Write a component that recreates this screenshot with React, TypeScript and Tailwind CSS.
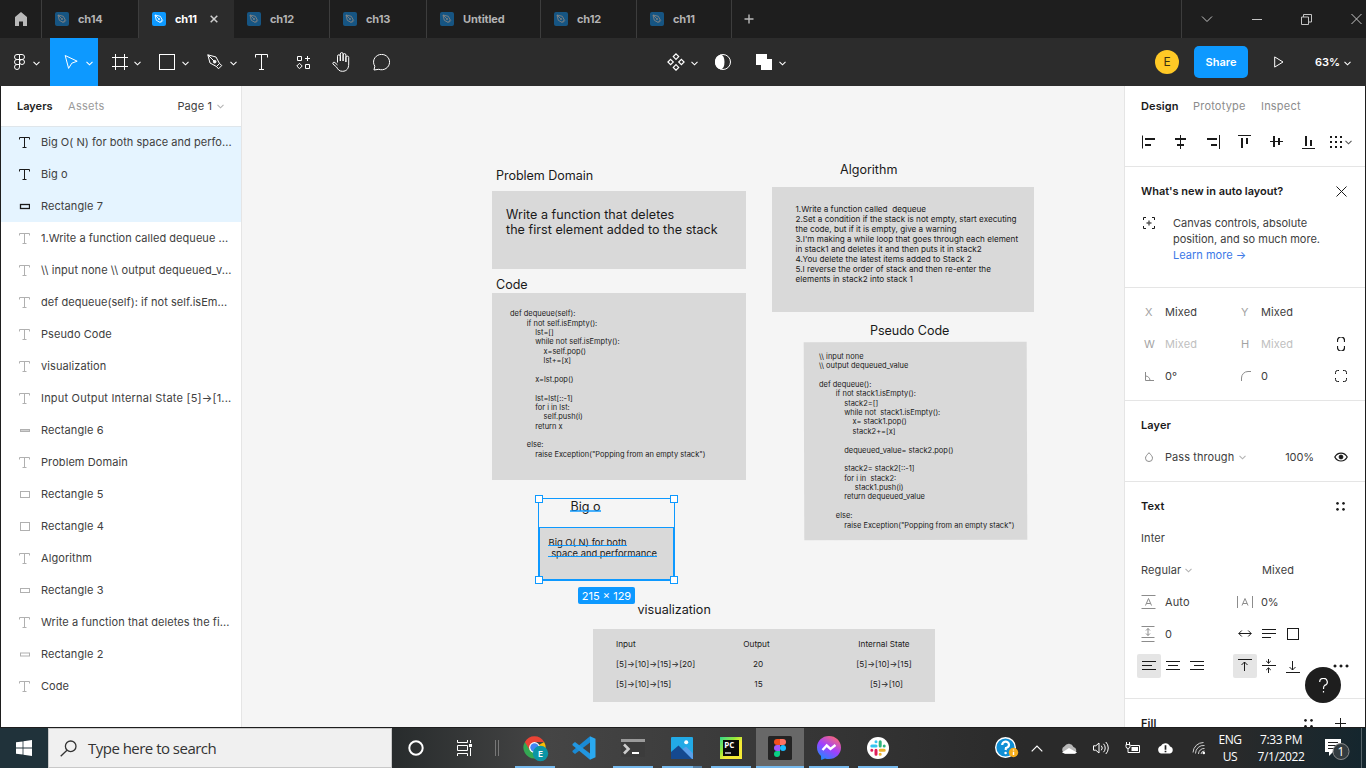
import type { ReactNode } from "react";

/* ---------- shared bits ---------- */

function Svg({ w, h, children, className = "" }: { w: number; h: number; children: ReactNode; className?: string }) {
  return (
    <svg width={w} height={h} viewBox={`0 0 ${w} ${h}`} fill="none" stroke="currentColor" className={`shrink-0 ${className}`}>
      {children}
    </svg>
  );
}

function Chevron({ className = "" }: { className?: string }) {
  return (
    <Svg w={7} h={5} className={className}>
      <path d="M0.5 0.8 L3.5 3.8 L6.5 0.8" strokeWidth="1.1" />
    </Svg>
  );
}

/* ---------- title bar ---------- */

function PenGlyph() {
  return (
    <Svg w={14} h={14}>
      <rect width="14" height="14" rx="2" fill="#0d99ff" stroke="none" />
      <path d="M3 3 L8.3 4.3 L10.3 8 L8 10.3 L4.3 8.3 Z M3 3 L6.5 6.5 M8.5 10.8 L10.8 8.5" stroke="#fff" strokeWidth="0.9" />
      <circle cx="7" cy="7" r="0.9" fill="#fff" stroke="none" />
    </Svg>
  );
}

function Tab({ name, width, active = false }: { name: string; width: string; active?: boolean }) {
  return (
    <div
      className={`flex h-full shrink-0 items-center border-r pl-[13px] text-[11px] font-bold ${width} ${
        active ? "border-[#2c2c2c] bg-[#2c2c2c] text-white" : "border-[#3d3d3d] text-[#b3b3b3]"
      }`}
    >
      <span className={active ? "flex" : "flex opacity-45"}>
        <PenGlyph />
      </span>
      <span className="ml-[9px] tracking-[-0.1px]">{name}</span>
      {active && (
        <Svg w={8} h={8} className="ml-[13px] text-[#d0d0d0]">
          <path d="M0.7 0.7 L7.3 7.3 M7.3 0.7 L0.7 7.3" strokeWidth="1.5" />
        </Svg>
      )}
    </div>
  );
}

function TitleBar() {
  return (
    <div className="flex h-[38px] shrink-0 bg-[#1e1e1e] pl-px">
      <div className="flex w-[41px] shrink-0 items-center border-r border-[#3d3d3d] pl-[14px]">
        <Svg w={12} h={14}>
          <path d="M6 0 L12 5 V14 H8 V9.5 H4 V14 H0 V5 Z" fill="#b9b9b9" stroke="none" />
        </Svg>
      </div>
      <Tab name="ch14" width="w-[97px]" />
      <Tab name="ch11" width="w-[95px]" active />
      <Tab name="ch12" width="w-[96px]" />
      <Tab name="ch13" width="w-[97px]" />
      <Tab name="Untitled" width="w-[114px]" />
      <Tab name="ch12" width="w-[96px]" />
      <Tab name="ch11" width="w-[95px]" />
      <div className="flex w-[450px] shrink-0 items-center border-r border-[#3d3d3d] pl-3 text-[#b9b9b9]">
        <Svg w={10} h={10}>
          <path d="M5 0.5 V9.5 M0.5 5 H9.5" strokeWidth="1.4" />
        </Svg>
      </div>
      <div className="flex flex-1 items-center overflow-hidden pl-[19px] text-[#c4c4c4]">
        <Svg w={12} h={8}>
          <path d="M1 1.5 L6 6.5 L11 1.5" />
        </Svg>
        <Svg w={10} h={10} className="ml-[39px]">
          <path d="M0 5.5 H10" />
        </Svg>
        <Svg w={11} h={11} className="ml-[39px]">
          <path d="M0.5 3 H7.5 V10.5 H0.5 Z M2.5 3 V0.5 H10.5 V8 H7.5" />
        </Svg>
        <Svg w={11} h={12} className="ml-[39px]">
          <path d="M0.5 1 L10.5 11 M10.5 1 L0.5 11" />
        </Svg>
      </div>
    </div>
  );
}

/* ---------- toolbar ---------- */

function Tool({ children, cls, chevron = true }: { children: ReactNode; cls: string; chevron?: boolean }) {
  return (
    <div className={`flex h-full shrink-0 items-center ${cls}`}>
      {children}
      {chevron && <Chevron className="ml-auto mt-0.5" />}
    </div>
  );
}

function Toolbar() {
  return (
    <div className="flex h-12 shrink-0 items-center bg-[#2c2c2c] pl-px text-white">
      <Tool cls="w-[49px] pl-[13px] pr-[10px]">
        <Svg w={11} h={16}>
          <path d="M5.5 0.5 H3 a2.5 2.5 0 0 0 0 5 H5.5 M5.5 0.5 H8 a2.5 2.5 0 0 1 0 5 H5.5 M5.5 5.5 H3 a2.5 2.5 0 0 0 0 5 H5.5 M5.5 0.5 V13 a2.5 2.5 0 1 1 -2.5 -2.5" />
          <circle cx="8" cy="8" r="2.5" />
        </Svg>
      </Tool>
      <Tool cls="w-12 bg-[#0d99ff] pl-[14px] pr-[5px]">
        <Svg w={15} h={16}>
          <path d="M1.2 1.5 L13.2 7.2 L7.8 9.2 L4.6 14.4 Z" strokeLinejoin="round" />
        </Svg>
      </Tool>
      <Tool cls="w-12 pl-[14px] pr-[5px]">
        <Svg w={16} h={16}>
          <path d="M3.5 0 V16 M12.5 0 V16 M0 3.5 H16 M0 12.5 H16" />
        </Svg>
      </Tool>
      <Tool cls="w-12 pl-[13px] pr-[5px]">
        <Svg w={16} h={16}>
          <rect x="0.5" y="0.5" width="15" height="15" />
        </Svg>
      </Tool>
      <Tool cls="w-12 pl-[13px] pr-[5px]">
        <Svg w={16} h={16}>
          <path d="M0.8 0.8 L3 9 L9.5 12.5 L12.5 9.5 L9 3 Z M0.8 0.8 L7 7 M9.5 12.5 L11.5 14.8 L14.8 11.5 L12.5 9.5" strokeLinejoin="round" />
          <circle cx="7.7" cy="7.7" r="1.3" fill="#fff" />
        </Svg>
      </Tool>
      <Tool cls="w-10 pl-[13px]" chevron={false}>
        <Svg w={13} h={16}>
          <path d="M0.5 3.5 V0.5 H12.5 V3.5 M6.5 0.5 V15.5 M4 15.5 H9" />
        </Svg>
      </Tool>
      <Tool cls="w-10 pl-[14px]" chevron={false}>
        <Svg w={15} h={14}>
          <path d="M1.5 1.5 H5.5 V5.5 H1.5 Z M9.5 9.5 H13.5 V13.5 H9.5 Z M11.5 1 V6 M9 3.5 H14 M3.5 8.3 L6.2 11 L3.5 13.7 L0.8 11 Z" />
        </Svg>
      </Tool>
      <Tool cls="w-10 pl-[10px]" chevron={false}>
        <Svg w={18} h={20}>
          <path
            d="M5.5 10.5 V4.2 a1.4 1.4 0 0 1 2.8 0 V9 V2 a1.4 1.4 0 0 1 2.8 0 V9 V3 a1.4 1.4 0 0 1 2.8 0 V10 V5.5 a1.4 1.4 0 0 1 2.8 0 V12 c0 4.5 -2 7.3 -6.2 7.3 c-3.2 0 -4.4 -1.5 -6 -4.3 L1 12 c-.7 -1.2 .7 -2.4 1.9 -1.4 L5.5 13"
            strokeLinejoin="round"
          />
        </Svg>
      </Tool>
      <Tool cls="w-[305px] pl-[11px]" chevron={false}>
        <Svg w={18} h={17}>
          <path d="M1 16 L1.8 12.2 A8 7.7 0 1 1 5.8 15.3 Z" strokeLinejoin="round" />
        </Svg>
      </Tool>
      <div className="flex h-full w-[31px] items-center justify-between">
        <Svg w={18} h={18}>
          <path d="M9 0.9 L11.7 3.6 L9 6.3 L6.3 3.6 Z M9 11.7 L11.7 14.4 L9 17.1 L6.3 14.4 Z M3.6 6.3 L6.3 9 L3.6 11.7 L0.9 9 Z M14.4 6.3 L17.1 9 L14.4 11.7 L11.7 9 Z" strokeWidth="1.2" />
        </Svg>
        <Chevron className="mt-0.5" />
      </div>
      <Svg w={16} h={16} className="ml-[17px]">
        <circle cx="8" cy="8" r="7.5" />
        <path d="M6 0.4 A4.5 7.8 0 0 1 6 15.6 A7.8 7.8 0 0 1 6 0.4 Z" fill="#fff" stroke="none" />
      </Svg>
      <Svg w={16} h={16} className="ml-[25px]">
        <path d="M0 0 H11 V5 H16 V16 H5 V11 H0 Z" fill="#fff" stroke="none" />
      </Svg>
      <Chevron className="ml-[7px] mt-0.5" />
      <div className="ml-auto flex items-center">
        <div className="flex size-6 items-center justify-center rounded-full bg-[#ffc926] text-[12px] text-[#3d3010]">E</div>
        <div className="ml-[15px] flex h-8 w-[54px] items-center justify-center rounded-[5px] bg-[#0d99ff] text-[11px] font-semibold">Share</div>
        <Svg w={10} h={12} className="ml-[26px]">
          <path d="M0.7 0.9 L9 6 L0.7 11.1 Z" />
        </Svg>
        <span className="ml-[31px] w-[29px] text-[11px] font-semibold">63%</span>
        <Chevron className="mr-[15px] mt-0.5" />
      </div>
    </div>
  );
}

/* ---------- layers panel ---------- */

type Layer = { kind: "text" | "rect"; name: string; half?: number; spacing?: string };

const layers: Layer[] = [
  { kind: "text", name: "Big O( N) for both space and perfo...", spacing: "tracking-[0.04px]" },
  { kind: "text", name: "Big o" },
  { kind: "rect", name: "Rectangle 7", half: 2 },
  { kind: "text", name: "1.Write a function called dequeue ...", spacing: "tracking-[0.04px]" },
  { kind: "text", name: "\\\\ input none \\\\ output dequeued_v..." },
  { kind: "text", name: "def dequeue(self): if not self.isEm...", spacing: "tracking-[0.04px]" },
  { kind: "text", name: "Pseudo Code" },
  { kind: "text", name: "visualization" },
  { kind: "text", name: "Input Output Internal State [5]→[1...", spacing: "tracking-[0.2px]" },
  { kind: "rect", name: "Rectangle 6", half: 1 },
  { kind: "text", name: "Problem Domain" },
  { kind: "rect", name: "Rectangle 5", half: 3 },
  { kind: "rect", name: "Rectangle 4", half: 4 },
  { kind: "text", name: "Algorithm" },
  { kind: "rect", name: "Rectangle 3", half: 2 },
  { kind: "text", name: "Write a function that deletes the fi..." },
  { kind: "rect", name: "Rectangle 2", half: 1.5 },
  { kind: "text", name: "Code" },
];

function LayerRow({ layer, selected }: { layer: Layer; selected: boolean }) {
  const half = layer.half ?? 2;
  return (
    <div className={`flex h-8 shrink-0 items-center pl-[18px] ${selected ? "bg-[#e5f4ff]" : ""}`}>
      <Svg w={11} h={11} className={selected ? "text-[#1a1a1a]" : "text-[#b0b0b0]"}>
        {layer.kind === "text" ? (
          <path d="M0.5 2.5 V0.5 H10.5 V2.5 M5.5 0.5 V10.5 M3.5 10.5 H7.5" />
        ) : (
          <rect x="1.5" y={5.5 - half} width="9" height={half * 2} fill={half === 1 ? "#d0d0d0" : "none"} strokeWidth={selected ? 1.3 : 1} />
        )}
      </Svg>
      <span className={`ml-[11px] whitespace-pre ${layer.spacing ?? "tracking-[0.08px]"}`}>{layer.name}</span>
    </div>
  );
}

function LayersPanel() {
  return (
    <div className="flex w-[241px] shrink-0 flex-col overflow-hidden border-r border-[#e5e5e5] bg-white text-[11px] text-[#404040]">
      <div className="flex h-10 shrink-0 items-center pl-4">
        <span className="w-[51px] font-semibold text-[#222]">Layers</span>
        <span className="text-[#9a9a9a] tracking-[0.3px]">Assets</span>
        <span className="ml-auto tracking-[0.1px]">Page 1</span>
        <Chevron className="ml-[5px] mr-[17px] text-[#b3b3b3]" />
      </div>
      <div className="flex flex-col">
        {layers.map((l, i) => (
          <div key={l.name} className={i === 0 ? "shadow-[inset_0_1px_0_#dfe6eb] *:bg-transparent bg-[#e5f4ff]" : ""}>
            <LayerRow layer={l} selected={i < 3} />
          </div>
        ))}
      </div>
    </div>
  );
}

/* ---------- canvas ---------- */

const code = `def dequeue(self):
        if not self.isEmpty():
            lst=[]
            while not self.isEmpty():
                x=self.pop()
                lst+=[x]

            x=lst.pop()

            lst=lst[::-1]
            for i in lst:
                self.push(i)
            return x

        else:
            raise Exception("Popping from an empty stack")`;

const pseudo = `\\\\ input none
\\\\ output dequeued_value

def dequeue():
        if not stack1.isEmpty():
            stack2=[]
            while not  stack1.isEmpty():
                x= stack1.pop()
                stack2+=[x]

            dequeued_value= stack2.pop()

            stack2= stack2[::-1]
            for i in  stack2:
                 stack1.push(i)
            return dequeued_value

        else:
            raise Exception("Popping from an empty stack")`;

const algorithm = `1.Write a function called  dequeue
2.Set a condition if the stack is not empty, start executing
the code, but if it is empty, give a warning
3.I'm making a while loop that goes through each element
in stack1 and deletes it and then puts it in stack2
4.You delete the latest items added to Stack 2
5.I reverse the order of stack and then re-enter the
elements in stack2 into stack 1`;

function Label({ at, children }: { at: string; children: ReactNode }) {
  return <div className={`absolute whitespace-pre text-[12.56px] leading-[15px] ${at}`}>{children}</div>;
}

function Handle({ at }: { at: string }) {
  return <div className={`absolute size-2 border border-[#0d99ff] bg-white ${at}`} />;
}

function Canvas() {
  return (
    <div className="relative flex-1 overflow-hidden bg-[#f5f5f5] text-[#1a1a1a]">
      <Label at="left-[254px] top-[82px] tracking-[-0.04px]">Problem Domain</Label>
      <div className="absolute left-[250px] top-[105px] h-[78px] w-[254px] bg-[#d9d9d9]" />
      <Label at="left-[264px] top-[121px] tracking-[0.04px]">{"Write a function that deletes\nthe first element added to the stack"}</Label>

      <Label at="left-[254px] top-[191px]">Code</Label>
      <div className="absolute left-[250px] top-[207px] h-[187px] w-[254px] bg-[#d9d9d9]" />
      <div className="absolute left-[268px] top-[223.2px] whitespace-pre text-[7.48px] leading-[9.38px]">{code}</div>

      <Label at="left-[598px] top-[76px]">Algorithm</Label>
      <div className="absolute left-[530px] top-[101px] h-[125px] w-[262px] bg-[#d9d9d9]" />
      <div className="absolute left-[553.5px] top-[118.3px] whitespace-pre text-[8.16px] leading-[10px]">{algorithm}</div>

      <Label at="left-[628px] top-[237px] tracking-[-0.04px]">Pseudo Code</Label>
      <div className="absolute left-[562px] top-[256.4px] h-[198px] w-[222.5px] rotate-[-0.17deg] bg-[#d9d9d9]" />
      <div className="absolute left-[577px] top-[265.8px] whitespace-pre text-[7.48px] leading-[9.38px]">{pseudo}</div>

      <Label at="left-[328.5px] top-[413px]">Big o</Label>
      <div className="absolute left-[297px] top-[441px] h-[53px] w-[135px] border border-[#0d99ff] bg-[#d9d9d9]" />
      <div className="absolute left-[306.5px] top-[450.6px] whitespace-pre text-[9.4px] leading-[11.3px]">{"Big O( N) for both\n space and performance"}</div>
      <div className="absolute left-[328px] top-[424px] h-0.5 w-[31px] bg-[#0d99ff]/75" />
      <div className="absolute left-[306px] top-[459px] h-px w-[79px] bg-[#0d99ff]" />
      <div className="absolute left-[306px] top-[470px] h-px w-[109px] bg-[#0d99ff]" />
      <div className="absolute left-[296px] top-[412px] h-[83px] w-[137px] border border-[#0d99ff]" />
      <Handle at="left-[293px] top-[409px]" />
      <Handle at="left-[428px] top-[409px]" />
      <Handle at="left-[293px] top-[490px]" />
      <Handle at="left-[428px] top-[490px]" />
      <div className="absolute left-[336px] top-[501px] flex h-[17px] w-[57px] items-center justify-center rounded-[2px] bg-[#0d99ff] text-[11px] text-white">
        215 × 129
      </div>

      <Label at="left-[395.5px] top-[516px]">visualization</Label>
      <div className="absolute left-[351px] top-[543px] grid h-[72.5px] w-[342px] grid-cols-[94px_93px_30px_102px] grid-rows-[20px_20px_20px] bg-[#d9d9d9] pl-[23px] pt-[5px] text-[8.2px] leading-5">
        <span>Input</span>
        <span className="text-center">Output</span>
        <span />
        <span className="text-center">Internal State</span>
        <span>[5]→[10]→[15]→[20]</span>
        <span className="pl-[3px] text-center">20</span>
        <span />
        <span className="text-center">[5]→[10]→[15]</span>
        <span>[5]→[10]→[15]</span>
        <span className="pl-[4px] text-center">15</span>
        <span />
        <span className="pl-[5px] text-center">[5]→[10]</span>
      </div>
    </div>
  );
}

/* ---------- design panel ---------- */

function Section({ children, className = "" }: { children: ReactNode; className?: string }) {
  return <div className={`flex shrink-0 flex-col border-b border-[#e5e5e5] pt-2 ${className}`}>{children}</div>;
}

function Row({ children, className = "" }: { children: ReactNode; className?: string }) {
  return <div className={`flex h-8 shrink-0 items-center pl-4 ${className}`}>{children}</div>;
}

function FourDots() {
  return (
    <Svg w={9} h={9}>
      <path d="M1.5 0 a1.4 1.4 0 1 0 .01 0 M7.5 0 a1.4 1.4 0 1 0 .01 0 M1.5 6 a1.4 1.4 0 1 0 .01 0 M7.5 6 a1.4 1.4 0 1 0 .01 0" fill="#1a1a1a" stroke="none" />
    </Svg>
  );
}

function DesignPanel() {
  return (
    <div className="flex w-[241px] shrink-0 flex-col overflow-hidden border-l border-[#e5e5e5] bg-white text-[11px] tracking-[0.1px] text-[#404040]">
      <div className="flex shrink-0 flex-col border-b border-[#e5e5e5] pb-2">
        <div className="flex h-10 items-center pl-4 text-[#8c8c8c]">
          <span className="w-[52px] font-semibold text-[#1a1a1a]">Design</span>
          <span className="w-[68px] tracking-[0.2px]">Prototype</span>
          <span className="tracking-[0.2px]">Inspect</span>
        </div>
        <div className="flex h-8 items-center pl-4 text-[#1a1a1a]">
          <Svg w={14} h={14} className="mr-[19px]">
            <path d="M1.5 0.5 V13.5" />
            <path d="M4 4 H14 M4 10 H10" strokeWidth="2" />
          </Svg>
          <Svg w={14} h={14} className="mr-[18px]">
            <path d="M6.5 0 V14" />
            <path d="M1 4 H12 M3 10 H10" strokeWidth="2" />
          </Svg>
          <Svg w={14} h={14} className="mr-[18px]">
            <path d="M13.5 0 V14" />
            <path d="M1 4 H11 M5 10 H11" strokeWidth="2" />
          </Svg>
          <Svg w={13} h={14} className="mr-[19px]">
            <path d="M0 0.5 H13" />
            <path d="M4 3 V13 M9 3 V9" strokeWidth="2" />
          </Svg>
          <Svg w={13} h={14} className="mr-[19px]">
            <path d="M0 6.5 H13" />
            <path d="M4 1 V12 M9 3 V10" strokeWidth="2" />
          </Svg>
          <Svg w={13} h={14} className="mr-[15px]">
            <path d="M0 13.5 H13" />
            <path d="M4 1 V11 M9 5 V11" strokeWidth="2" />
          </Svg>
          <Svg w={13} h={13}>
            <path d="M0 1 H13 M0 6 H13 M0 11 H13" strokeWidth="2" strokeDasharray="2 3" />
          </Svg>
          <Chevron className="ml-0.5 text-[#555]" />
        </div>
      </div>

      <Section className="h-[121px]">
        <Row className="font-semibold tracking-[-0.02px] text-[#1a1a1a]">
          What's new in auto layout?
          <Svg w={11} h={11} className="ml-auto mr-[18px]">
            <path d="M0.5 0.5 L10.5 10.5 M10.5 0.5 L0.5 10.5" />
          </Svg>
        </Row>
        <div className="flex pl-[18px] pt-2">
          <Svg w={12} h={12} className="mt-0.5 text-[#1a1a1a]">
            <path d="M0.5 3 V0.5 H3 M9 0.5 H11.5 V3 M11.5 9 V11.5 H9 M3 11.5 H0.5 V9" />
            <path d="M6 3.5 V8.5 M3.5 6 H8.5" stroke="#555" strokeWidth="1.4" />
          </Svg>
          <div className="ml-[18px] leading-4 tracking-[-0.01px]">
            Canvas controls, absolute
            <br />
            position, and so much more.
            <br />
            <span className="tracking-[0.02px] text-[#3b78e7]">Learn more →</span>
          </div>
        </div>
      </Section>

      <Section className="h-[113px]">
        <Row>
          <span className="w-6 pl-1 text-[#a3a3a3]">X</span>
          <span className="w-[72px]">Mixed</span>
          <span className="w-6 pl-1 text-[#a3a3a3]">Y</span>
          <span>Mixed</span>
        </Row>
        <Row className="text-[#c0c0c0]">
          <span className="w-6 pl-[3px] text-[#a3a3a3]">W</span>
          <span className="w-[72px]">Mixed</span>
          <span className="w-6 pl-1 text-[#a3a3a3]">H</span>
          <span>Mixed</span>
          <Svg w={8} h={14} className="ml-auto mr-5 text-[#1a1a1a]">
            <path d="M0.5 5 V3.5 a3 3 0 0 1 7 0 V5 M0.5 9 V10.5 a3 3 0 0 0 7 0 V9" strokeWidth="1.2" />
          </Svg>
        </Row>
        <Row>
          <Svg w={9} h={9} className="ml-1 text-[#8c8c8c]">
            <path d="M0.5 0 V8.5 H9 M0.5 4 A4.5 4.5 0 0 1 5 8.5" />
          </Svg>
          <span className="ml-[11px] w-[72px]">0°</span>
          <Svg w={10} h={10} className="ml-1 text-[#8c8c8c]">
            <path d="M0.5 10 V7 A6.5 6.5 0 0 1 7 0.5 H10" />
          </Svg>
          <span className="ml-[10px]">0</span>
          <Svg w={12} h={12} className="ml-auto mr-[18px] text-[#1a1a1a]">
            <path d="M0.5 4 V2.5 a2 2 0 0 1 2 -2 H4 M8 0.5 H9.5 a2 2 0 0 1 2 2 V4 M11.5 8 V9.5 a2 2 0 0 1 -2 2 H8 M4 11.5 H2.5 a2 2 0 0 1 -2 -2 V8" />
          </Svg>
        </Row>
      </Section>

      <Section className="h-[81px]">
        <Row className="font-semibold text-[#1a1a1a]">Layer</Row>
        <Row>
          <Svg w={8} h={10} className="ml-1 text-[#8c8c8c]">
            <path d="M4 0.7 C6 3 7.5 4.3 7.5 6.2 a3.5 3.3 0 0 1 -7 0 C0.5 4.3 2 3 4 0.7 Z" />
          </Svg>
          <span className="ml-3 tracking-[0.08px]">Pass through</span>
          <Chevron className="ml-[5px] text-[#b3b3b3]" />
          <span className="ml-auto tracking-[-0.1px]">100%</span>
          <Svg w={14} h={10} className="ml-5 mr-[17px] text-[#1a1a1a]">
            <path d="M0.8 5 C3.5 -0.3 10.5 -0.3 13.2 5 C10.5 10.3 3.5 10.3 0.8 5 Z" strokeWidth="1.2" />
            <circle cx="7" cy="5" r="1.9" fill="#1a1a1a" />
          </Svg>
        </Row>
      </Section>

      <Section className="h-[217px]">
        <Row className="justify-between pr-5 font-semibold text-[#1a1a1a]">
          Text
          <FourDots />
        </Row>
        <Row>Inter</Row>
        <Row>
          Regular
          <Chevron className="ml-1 text-[#b3b3b3]" />
          <span className="ml-auto mr-[71px]">Mixed</span>
        </Row>
        <Row>
          <Svg w={15} h={14} className="text-[#8c8c8c]">
            <path d="M0.5 0.5 H14.5 M0.5 13.5 H14.5 M4.5 10.5 L7.5 3.5 L10.5 10.5 M5.5 8.5 H9.5" />
          </Svg>
          <span className="ml-[9px] w-[72px]">Auto</span>
          <Svg w={16} h={12} className="text-[#8c8c8c]">
            <path d="M0.5 0 V12 M15.5 0 V12 M5 9.5 L8 2.5 L11 9.5 M6 7.5 H10" />
          </Svg>
          <span className="ml-2 tracking-[-0.1px]">0%</span>
        </Row>
        <Row>
          <Svg w={14} h={16} className="text-[#8c8c8c]">
            <path d="M0.5 0.5 H13.5 M0.5 11.5 H13.5 M0.5 15.5 H13.5 M7 2.5 V9.5 M5 4.5 L7 2.5 L9 4.5 M5 7.5 L7 9.5 L9 7.5" />
          </Svg>
          <span className="ml-[10px] w-[73px]">0</span>
          <Svg w={14} h={8} className="text-[#1a1a1a]">
            <path d="M0.8 3.5 H13.2 M3.8 0.5 L0.8 3.5 L3.8 6.5 M10.2 0.5 L13.2 3.5 L10.2 6.5" />
          </Svg>
          <Svg w={14} h={10} className="ml-[10px] text-[#1a1a1a]">
            <path d="M0 0.5 H14 M0 4.5 H14 M0 8.5 H9" />
          </Svg>
          <Svg w={12} h={12} className="ml-[11px] text-[#1a1a1a]">
            <rect x="0.5" y="0.5" width="11" height="11" />
          </Svg>
        </Row>
        <Row className="-ml-1 text-[#1a1a1a]">
          <div className="flex size-6 items-center justify-center rounded-[2px] bg-[#e5e5e5]">
            <Svg w={14} h={10}>
              <path d="M0 0.5 H14 M0 4.5 H10 M0 8.5 H14" />
            </Svg>
          </div>
          <div className="flex size-6 items-center justify-center">
            <Svg w={14} h={10}>
              <path d="M0 0.5 H14 M2 4.5 H12 M0 8.5 H14" />
            </Svg>
          </div>
          <div className="flex size-6 items-center justify-center">
            <Svg w={14} h={10}>
              <path d="M0 0.5 H14 M4 4.5 H14 M0 8.5 H14" />
            </Svg>
          </div>
          <div className="ml-6 flex size-6 items-center justify-center rounded-[2px] bg-[#e5e5e5]">
            <Svg w={14} h={14}>
              <path d="M0 0.5 H14 M6.5 3 V12 M3.5 6 L6.5 3 L9.5 6" />
            </Svg>
          </div>
          <div className="flex size-6 items-center justify-center">
            <Svg w={14} h={14}>
              <path d="M0 6.5 H14 M6.5 0 V4.5 M4.2 2 L6.5 4.2 L8.8 2 M6.5 14 V9 M4.2 11 L6.5 8.8 L8.8 11" />
            </Svg>
          </div>
          <div className="flex size-6 items-center justify-center">
            <Svg w={14} h={14}>
              <path d="M0 13.5 H14 M6.5 2 V11 M3.5 8 L6.5 11 L9.5 8" />
            </Svg>
          </div>
          <Svg w={16} h={4} className="ml-auto mr-4">
            <path d="M2 0.5 a1.5 1.5 0 1 0 .01 0 M8 0.5 a1.5 1.5 0 1 0 .01 0 M14 0.5 a1.5 1.5 0 1 0 .01 0" fill="#1a1a1a" stroke="none" />
          </Svg>
        </Row>
      </Section>

      <Section>
        <Row className="font-semibold text-[#1a1a1a]">
          Fill
          <span className="ml-auto mr-[22px] flex">
            <FourDots />
          </span>
          <Svg w={11} h={11} className="mr-[19px]">
            <path d="M5.5 0 V11 M0 5.5 H11" />
          </Svg>
        </Row>
      </Section>
    </div>
  );
}

/* ---------- Windows taskbar ---------- */

function TaskbarApp({ children, cls = "", bar }: { children: ReactNode; cls?: string; bar?: string }) {
  return (
    <div className={`relative flex h-10 w-12 shrink-0 items-center justify-center ${cls}`}>
      {children}
      {bar && <div className={`absolute bottom-0 h-0.5 bg-[#76b9ed] ${bar}`} />}
    </div>
  );
}

function Taskbar() {
  return (
    <div className="flex h-10 shrink-0 bg-linear-to-r from-[#262a2b] from-28% via-[#454545] via-40% to-[#2a2a2a] to-75% font-['Open_Sans',sans-serif] text-white">
      <div className="flex w-12 shrink-0 items-center justify-center bg-[#20323a]">
        <Svg w={16} h={16}>
          <path d="M0 2.3 L6.6 1.4 V7.6 H0 Z M7.4 1.3 L16 0 V7.6 H7.4 Z M0 8.4 H6.6 V14.6 L0 13.7 Z M7.4 8.4 H16 V16 L7.4 14.7 Z" fill="#fff" stroke="none" />
        </Svg>
      </div>
      <div className="flex w-[344px] shrink-0 items-center border border-[#c8c8c8] bg-[#f0f0f0] pl-[11px] text-[15px] text-[#333]">
        <Svg w={17} h={17}>
          <circle cx="10.7" cy="6.3" r="5.3" strokeWidth="1.3" />
          <path d="M7 10.2 L0.7 16.3" strokeWidth="1.3" />
        </Svg>
        <span className="ml-[11px] tracking-[-0.52px]">Type here to search</span>
      </div>
      <TaskbarApp>
        <Svg w={16} h={16}>
          <circle cx="8" cy="8" r="6.7" strokeWidth="2" />
        </Svg>
      </TaskbarApp>
      <TaskbarApp>
        <Svg w={17} h={16}>
          <path d="M1.5 0 V2.5 H11.5 V0 M1.5 5.5 H11.5 V10.5 H1.5 Z M1.5 16 V13.5 H11.5 V16 M14.5 0 V3 M14.5 8 V16" />
          <path d="M13 4 H16 V7 H13 Z" fill="#fff" stroke="none" />
        </Svg>
      </TaskbarApp>
      <div className="flex w-[23px] items-center justify-center pr-1">
        <Svg w={5} h={16} className="text-[#777]">
          <path d="M0.5 0 V16 M3.5 0 V16" />
        </Svg>
      </div>
      <TaskbarApp bar="left-1 w-10">
        <Svg w={26} h={26} className="ml-0.5 mt-0.5">
          <g stroke="none">
            <path d="M11.5 11.5 L21.1 6 A11 11 0 0 1 11.5 22.5 Z" fill="#fbbc04" />
            <path d="M11.5 11.5 L11.5 22.5 A11 11 0 0 1 1.9 6 Z" fill="#34a853" />
            <path d="M11.5 6 H21.1 A11 11 0 0 0 1.9 6 L6.7 14 Z" fill="#ea4335" />
            <circle cx="11.5" cy="11.5" r="5.4" fill="#fff" />
            <circle cx="11.5" cy="11.5" r="4.2" fill="#4285f4" />
            <circle cx="17.5" cy="17.5" r="7.7" fill="#0b95a5" />
          </g>
          <text x="17.5" y="21" fontSize="9.5" fontWeight="600" textAnchor="middle" fill="#fff" stroke="none">
            E
          </text>
        </Svg>
      </TaskbarApp>
      <TaskbarApp cls="ml-px">
        <Svg w={24} h={24}>
          <g stroke="none">
            <path d="M18 0.2 L23.5 2.8 V21.2 L18 23.8 Z" fill="#2aa9f0" />
            <path d="M18 0.2 V6.5 L3 18 L0.5 16 V14.8 Z" fill="#1a8ad4" />
            <path d="M18 23.8 V17.5 L3 6 L0.5 8 V9.2 Z" fill="#2196e0" />
          </g>
        </Svg>
      </TaskbarApp>
      <TaskbarApp cls="ml-px" bar="left-1 w-10">
        <Svg w={24} h={18}>
          <rect width="24" height="18" rx="1" fill="#3c3c3c" stroke="none" />
          <path d="M0 0 H24 V3 H0 Z" fill="#9a9a9a" stroke="none" />
          <path d="M3 5.5 L7.5 10 L3 14.5" stroke="#ccc" strokeWidth="2.6" />
          <path d="M11 14 H18" stroke="#fff" strokeWidth="2" />
        </Svg>
      </TaskbarApp>
      <TaskbarApp cls="ml-px" bar="left-1 w-[31px]">
        <Svg w={22} h={22}>
          <g stroke="none">
            <rect width="22" height="22" rx="1" fill="#22aae6" />
            <path d="M11 12.5 L15 9.5 L22 16.5 V22 H18 Z" fill="#5a9fe8" />
            <path d="M0 15 L7.5 8.5 L21 22 H0 Z" fill="#15498f" />
            <circle cx="15.2" cy="5.2" r="2" fill="#fff" />
          </g>
        </Svg>
        <div className="absolute bottom-0 left-[35px] h-0.5 w-[9px] bg-[#557fa3]" />
      </TaskbarApp>
      <TaskbarApp cls="ml-px" bar="left-1 w-10">
        <div className="flex size-[22px] items-center justify-center bg-linear-to-br from-[#21d789] via-[#8ee83a] via-35% to-[#f5ea35] to-60%">
          <Svg w={16} h={16}>
            <rect width="16" height="16" fill="#0a0a0a" stroke="none" />
            <text x="1.3" y="8.4" fontSize="8" fontWeight="700" fill="#fff" stroke="none">
              PC
            </text>
            <path d="M2 13 H8" stroke="#ddd" strokeWidth="1.4" />
          </Svg>
        </div>
      </TaskbarApp>
      <TaskbarApp cls="ml-px bg-[#686868]" bar="left-0 w-12">
        <Svg w={24} h={24}>
          <g stroke="none">
            <rect width="24" height="24" rx="1.5" fill="#242424" />
            <path d="M12 3 H9 a3 3 0 0 0 0 6 H12 Z" fill="#f24e1e" />
            <path d="M12 3 H15 a3 3 0 0 1 0 6 H12 Z" fill="#ff7262" />
            <path d="M12 9 H9 a3 3 0 0 0 0 6 H12 Z" fill="#a259ff" />
            <circle cx="15" cy="12" r="3" fill="#1abcfe" />
            <path d="M12 15 H9 a3 3 0 1 0 3 3 Z" fill="#0acf83" />
          </g>
        </Svg>
      </TaskbarApp>
      <TaskbarApp cls="ml-px" bar="left-1 w-10">
        <Svg w={24} h={24}>
          <defs>
            <linearGradient id="msg" x1="0.2" y1="1" x2="0.8" y2="0">
              <stop offset="0" stopColor="#1a8cff" />
              <stop offset="0.5" stopColor="#a040ff" />
              <stop offset="1" stopColor="#ff6a70" />
            </linearGradient>
          </defs>
          <path d="M12 0 C5.3 0 0 4.9 0 11.5 C0 15 1.5 18 4 20 L4.2 23.9 L8 22.4 C9.2 22.8 10.6 23 12 23 C18.7 23 24 18.1 24 11.5 C24 4.9 18.7 0 12 0 Z" fill="url(#msg)" stroke="none" />
          <path d="M5.5 14 L9.7 9.5 L13.5 13 L18.5 9" stroke="#fff" strokeWidth="2.4" />
        </Svg>
      </TaskbarApp>
      <TaskbarApp cls="ml-px" bar="left-1 w-10">
        <Svg w={22} h={22}>
          <circle cx="11" cy="11" r="11" fill="#fff" stroke="none" />
          <g strokeWidth="3" strokeLinecap="round">
            <path d="M9 4.8 H9.01 M4.8 9 H9" stroke="#36c5f0" />
            <path d="M13.2 4.8 V9 M17.2 9 H17.21" stroke="#2eb67d" />
            <path d="M17.2 13.2 H13.2 M13.2 17.2 H13.21" stroke="#ecb22e" />
            <path d="M9 17.2 V13.2 M4.8 13.2 H4.81" stroke="#e01e5a" />
          </g>
        </Svg>
      </TaskbarApp>
      <div className="flex flex-1 items-center bg-linear-to-r from-transparent from-70% to-[#14262e]">
        <Svg w={24} h={22} className="ml-[93px]">
          <circle cx="10.5" cy="10.5" r="9.8" fill="#0f8fd6" stroke="#fff" strokeWidth="1.4" />
          <path d="M7.2 8 A3.4 3.2 0 1 1 11 11 L10.6 13" stroke="#fff" strokeWidth="2.2" />
          <circle cx="10.6" cy="16" r="1.3" fill="#fff" stroke="none" />
          <circle cx="18.5" cy="15.5" r="4.7" fill="#f6ad1c" stroke="none" />
          <path d="M18.5 14.8 V18 M18.5 12.5 V13.6" stroke="#fff" strokeWidth="1.4" />
        </Svg>
        <Svg w={12} h={7} className="ml-3">
          <path d="M0.7 6.3 L6 1 L11.3 6.3" strokeWidth="1.2" />
        </Svg>
        <Svg w={17} h={11} className="ml-[18px]">
          <path d="M4 10.5 a3.8 3.8 0 0 1 -.5 -7.2 A5 5 0 0 1 12.5 4 a3.5 3.5 0 0 1 1 6.5 Z" fill="#b8b8b8" stroke="none" />
          <path d="M1 9.5 L8 5 L16 9.5 L14 10.8 H4 Z" fill="#fff" stroke="none" />
        </Svg>
        <Svg w={17} h={14} className="ml-[15px]">
          <path d="M0.5 4.8 H2.8 L6 2 V12 L2.8 9.2 H0.5 Z M8.3 4.7 a3.5 3.5 0 0 1 0 4.6 M10.5 2.8 a6 6 0 0 1 0 8.4 M12.8 1 a8.5 8.5 0 0 1 0 12" />
        </Svg>
        <Svg w={16} h={12} className="ml-[15px]">
          <path d="M5.5 3.5 H14.5 V10.5 H4.5 M1 2.5 H5 V4.5 a2 2 0 0 1 -4 0 Z M3 6.5 V10.5 H5 M1.5 0 V2 M4.5 0 V2" />
          <path d="M6.5 5 H13 V9 H6.5 Z" fill="#fff" stroke="none" />
        </Svg>
        <Svg w={17} h={13} className="ml-4">
          <path d="M4 11.5 a4 4 0 0 1 -.2 -7.6 A5 5 0 0 1 13 4.5 a3.6 3.6 0 0 1 0 7 Z" fill="#fff" stroke="none" />
          <path d="M8.5 3.3 V7.7 M8.5 8.8 V10.2" stroke="#222" strokeWidth="1.7" />
        </Svg>
        <Svg w={14} h={14} className="ml-[18px]">
          <path d="M1 11.5 A10.5 10.5 0 0 1 11.5 1.5 M3.5 12.5 A8 8 0 0 1 12.5 4.5 M6.5 13 A5.5 5.5 0 0 1 12.5 7.5 M9 13 a3.5 3.5 0 0 1 3.5 -3" stroke="#d0d0d0" />
          <circle cx="11.8" cy="12" r="1.3" fill="#fff" stroke="none" />
        </Svg>
        <div className="ml-[6px] w-9 text-center text-[12px] leading-[17px] tracking-[-0.5px]">
          ENG
          <br />
          US
        </div>
        <div className="ml-[5px] w-[56px] text-center text-[12px] leading-[17px] tracking-[-0.4px] whitespace-nowrap">
          7:33 PM
          <br />
          7/1/2022
        </div>
        <Svg w={25} h={24} className="ml-4">
          <path d="M0 3 H16 V16 H8 L4 20 V16 H0 Z" fill="#fff" stroke="none" />
          <path d="M3 6.5 H13 M3 9.5 H13 M3 12.5 H10" stroke="#222" />
          <circle cx="16" cy="15.5" r="8" fill="#333c40" stroke="#8a8a8a" />
          <text x="16" y="20" fontSize="12" textAnchor="middle" fill="#fff" stroke="none">
            1
          </text>
        </Svg>
        <div className="ml-auto mr-1 h-full w-px bg-[#56646a]" />
      </div>
    </div>
  );
}

export default function App() {
  return (
    <div className="flex h-[768px] w-[1366px] flex-col overflow-hidden bg-[#1e1e1e] font-['Inter',sans-serif] leading-4">
      <TitleBar />
      <Toolbar />
      <div className="relative flex h-[641px] shrink-0 overflow-hidden px-px">
        <LayersPanel />
        <Canvas />
        <DesignPanel />
        <div className="absolute left-[1305px] top-[581px] flex size-9 items-center justify-center rounded-full bg-[#1e1e1e] text-white">
          <Svg w={9} h={15}>
            <path d="M0.7 4 A3.8 3.6 0 1 1 5.5 7.4 Q4.5 8 4.5 11 M4.5 13 V14.5" strokeWidth="1.2" />
          </Svg>
        </div>
      </div>
      <div className="h-px shrink-0 bg-[#1e1e1e]" />
      <Taskbar />
    </div>
  );
}
